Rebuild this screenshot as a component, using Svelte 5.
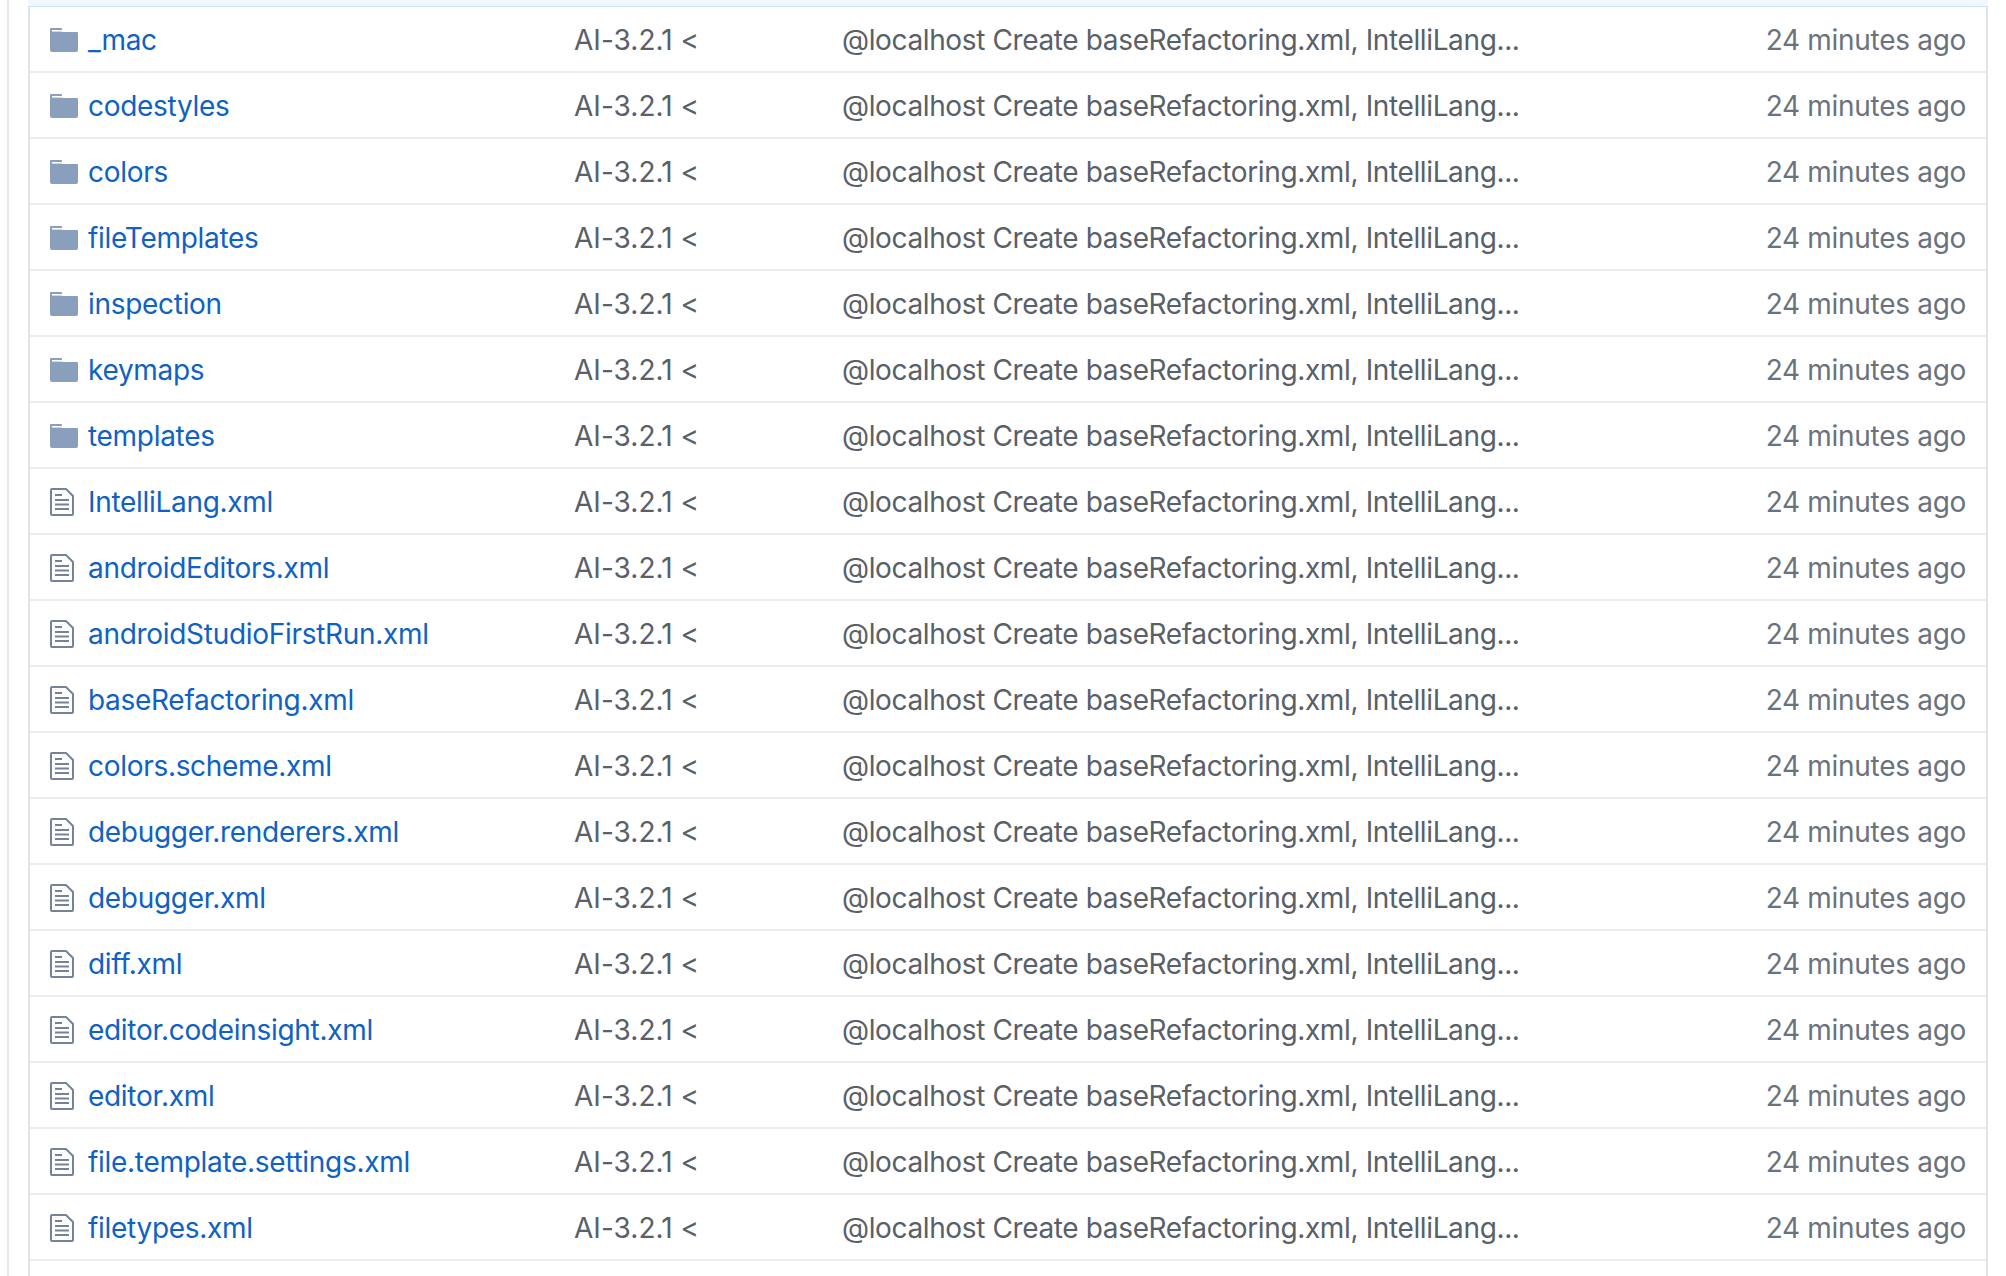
<script lang="ts">
	const dirs = ['_mac', 'codestyles', 'colors', 'fileTemplates', 'inspection', 'keymaps', 'templates'];
	const files = [
		'IntelliLang.xml',
		'androidEditors.xml',
		'androidStudioFirstRun.xml',
		'baseRefactoring.xml',
		'colors.scheme.xml',
		'debugger.renderers.xml',
		'debugger.xml',
		'diff.xml',
		'editor.codeinsight.xml',
		'editor.xml',
		'file.template.settings.xml',
		'filetypes.xml'
	];
	const rows = [
		...dirs.map((name) => ({ name, dir: true })),
		...files.map((name) => ({ name, dir: false })),
		{ name: '', dir: false, empty: true }
	];
</script>

<div class="page">
	<div class="box">
		<div class="head"></div>
		{#each rows as row (row.name)}
			<div class="row">
				{#if !row.empty}
					<span class="icon">
						{#if row.dir}
							<svg width="28" height="24" viewBox="0 0 28 24">
								<path
									fill="#8a9fbb"
									d="M1 0h10a1 1 0 0 1 1 1v3h15a1 1 0 0 1 1 1v17a2 2 0 0 1-2 2H2a2 2 0 0 1-2-2V1a1 1 0 0 1 1-1z"
								/>
								<rect x="2" y="2" width="10" height="1.6" fill="#fff" />
							</svg>
						{:else}
							<svg width="24" height="28" viewBox="0 0 24 28" fill="none">
								<path
									stroke="#75839a"
									stroke-width="2"
									d="M2 1h14l7 7v18a1 1 0 0 1-1 1H2a1 1 0 0 1-1-1V2a1 1 0 0 1 1-1z"
								/>
								<path stroke="#75839a" stroke-width="2" d="M5 7h7M5 12h14M5 16.500h14M5 21h14" />
							</svg>
						{/if}
					</span>
					<a class="name" href="#top">{row.name}</a>
					<span class="commit">AI-3.2.1 &lt;</span>
					<span class="msg">@localhost Create baseRefactoring.xml, IntelliLang...</span>
					<span class="age">24 minutes ago</span>
				{/if}
			</div>
		{/each}
	</div>
</div>

<style>
	:global(body) {
		background: #fff;
		overflow: hidden;
	}
	.page {
		height: 1276px;
		overflow: hidden;
		box-sizing: border-box;
		margin-left: 7px;
		padding-left: 19px;
		padding-right: 18px;
		border-left: 2px solid #e8e9eb;
		font-family: Inter, 'Liberation Sans', sans-serif;
		font-size: 28px;
	}
	.box {
		border-left: 2px solid #e2e4e8;
		border-right: 2px solid #e2e4e8;
	}
	.head {
		height: 7px;
		background: #f1f8ff;
		border-bottom: 1px solid #c8e1ff;
		box-sizing: border-box;
		margin: 0 -2px;
	}
	.row {
		display: grid;
		grid-template-columns: 38px 486px 268px 1fr auto;
		align-items: center;
		height: 66px;
		box-sizing: border-box;
		padding: 2px 20px 0;
		border-bottom: 2px solid #eaecef;
		white-space: nowrap;
	}
	.row:last-child {
		border-bottom: 0;
	}
	.icon {
		display: flex;
		align-items: center;
	}
	.name {
		color: #0f62c4;
		text-decoration: none;
		letter-spacing: -0.3px;
	}
	.commit {
		color: #586069;
		letter-spacing: 0.05px;
	}
	.msg {
		color: #586069;
		letter-spacing: -0.37px;
	}
	.age {
		color: #6a737d;
		letter-spacing: -0.3px;
	}
</style>
